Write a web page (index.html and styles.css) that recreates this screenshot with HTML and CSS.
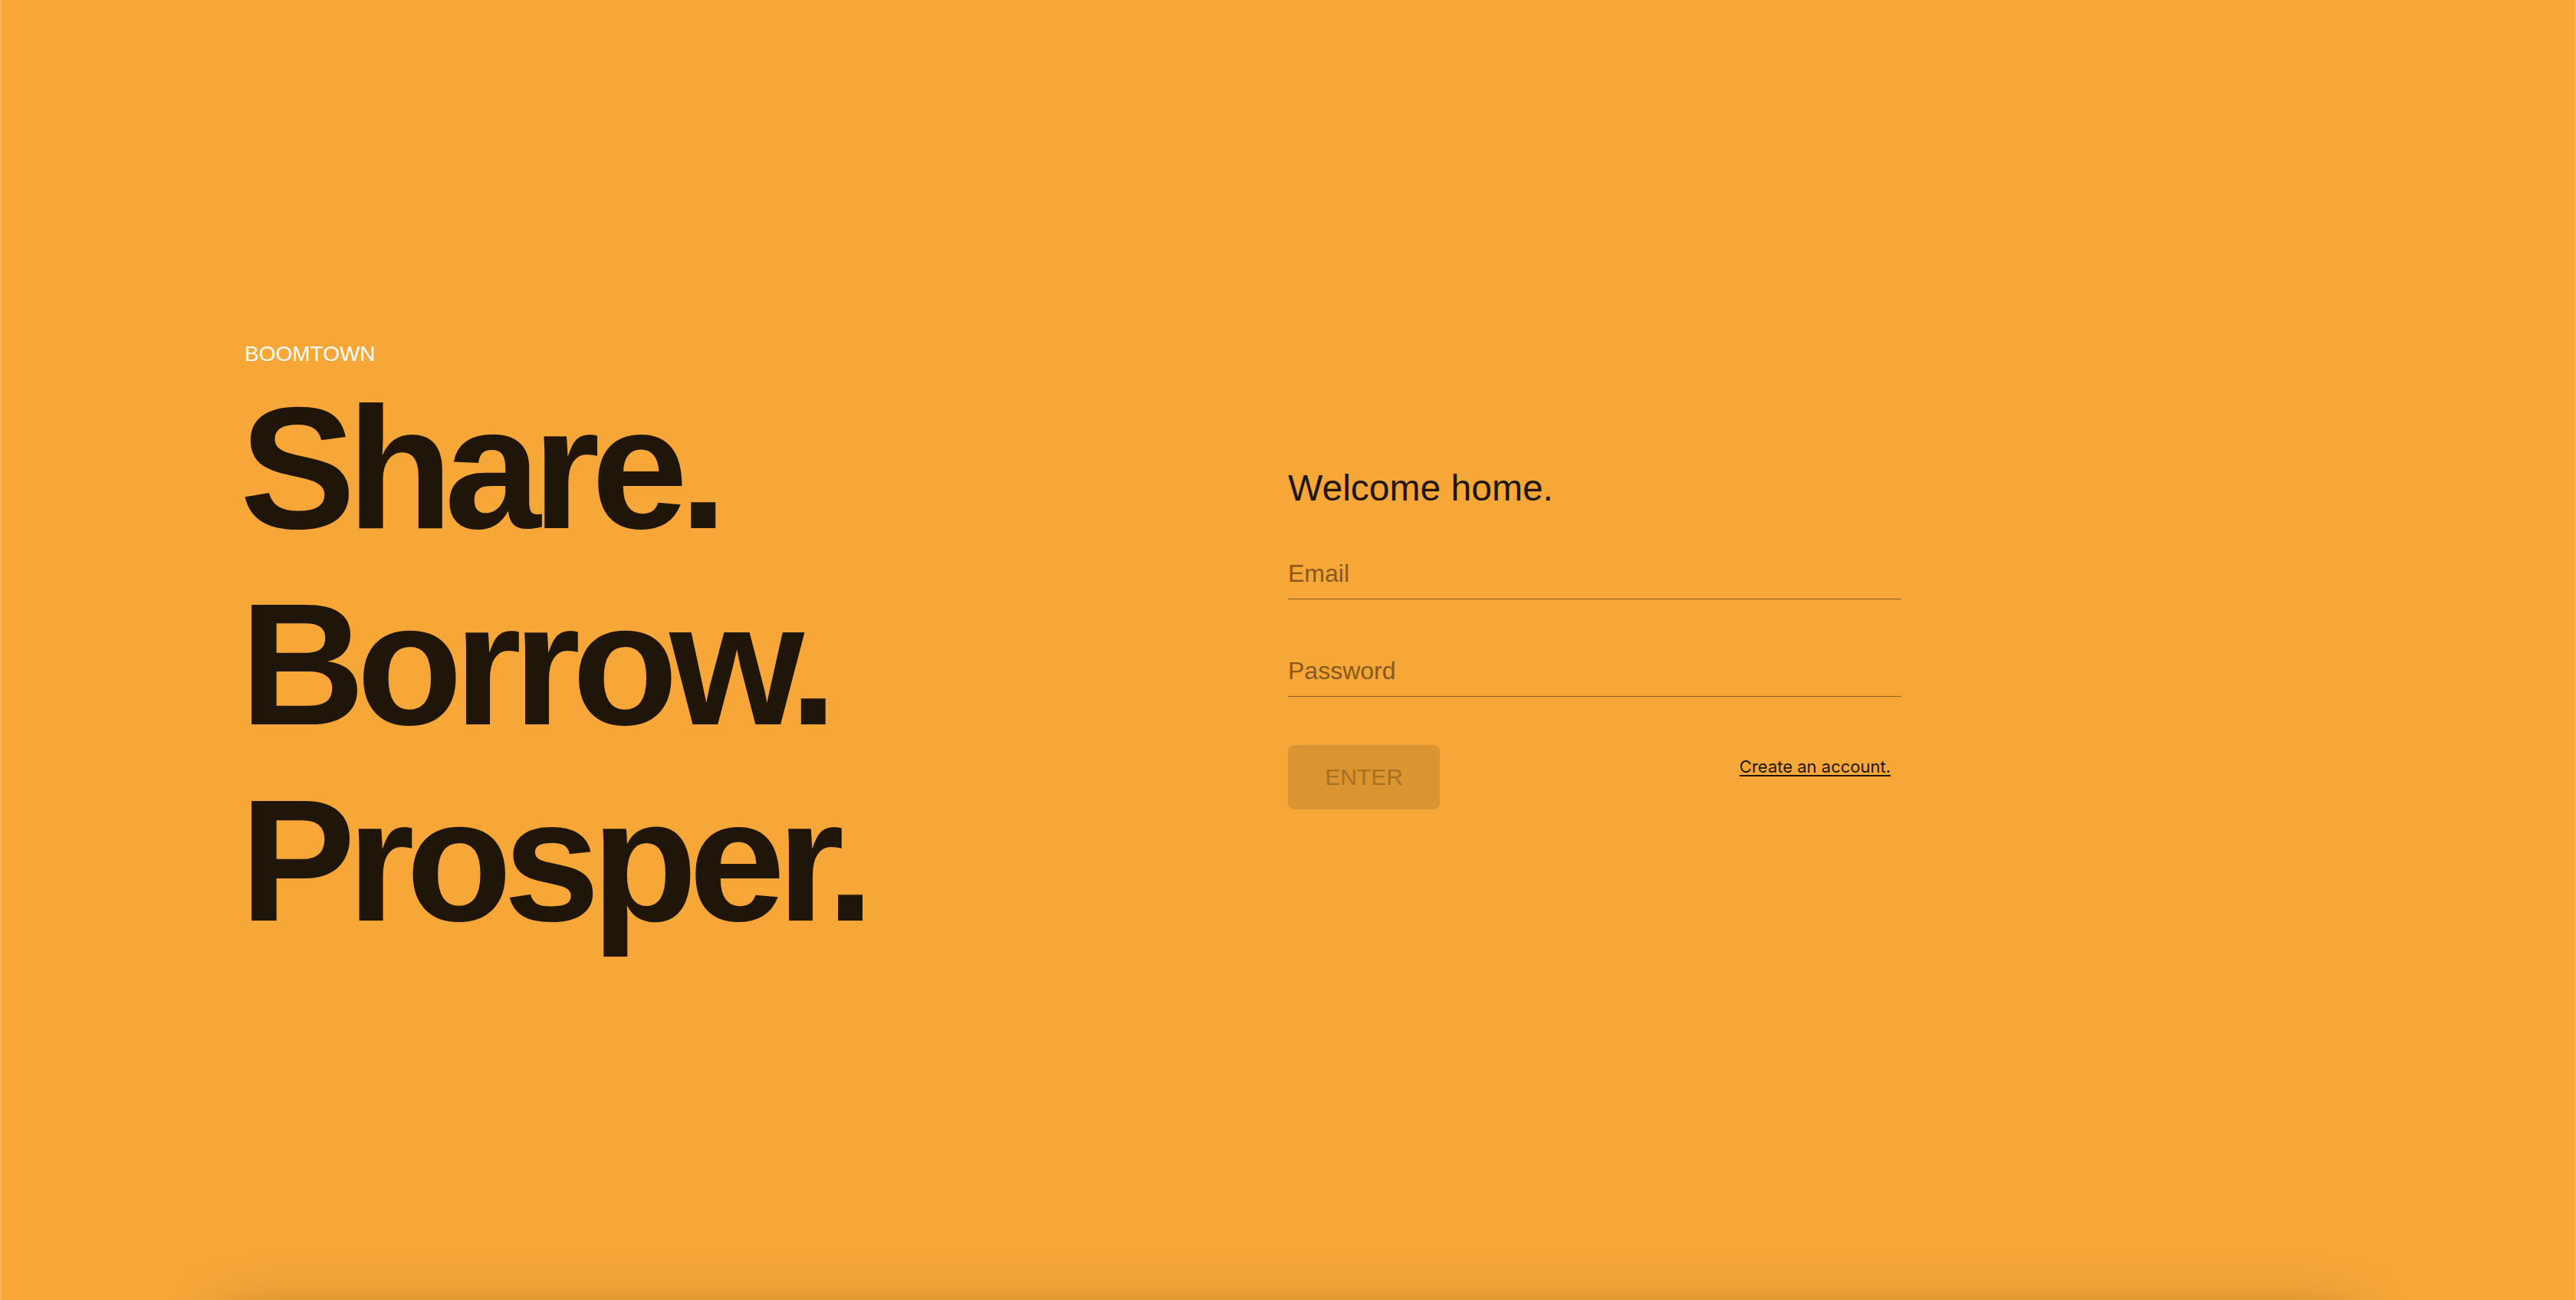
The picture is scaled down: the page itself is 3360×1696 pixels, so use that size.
FILE: index.html
```html
<!DOCTYPE html>
<html lang="en">
<head>
<meta charset="utf-8">
<title>Boomtown</title>
<link rel="stylesheet" href="styles.css">
</head>
<body>
<div class="page">
  <main class="layout">
    <section class="intro">
      <p class="brand">BOOMTOWN</p>
      <h1 class="headline">Share.<br>Borrow.<br>Prosper.</h1>
    </section>
    <section class="login">
      <form class="login-form">
        <h2 class="welcome">Welcome home.</h2>
        <div class="field"><span class="field-label">Email</span></div>
        <div class="field field-second"><span class="field-label">Password</span></div>
        <div class="actions">
          <button type="button" class="enter-btn" disabled>ENTER</button>
          <a class="signup-link" href="#">Create an account.</a>
        </div>
      </form>
    </section>
  </main>
  <div class="bottom-shadow"></div>
</div>
</body>
</html>
```

FILE: styles.css
```css
html, body {
  margin: 0;
  padding: 0;
  height: 100%;
  overflow: hidden;
}

body {
  background: #f7a738;
  font-family: "Liberation Sans", Arial, sans-serif;
}

.page {
  position: relative;
  height: 100vh;
  box-sizing: border-box;
  border-left: 2px solid #f9b459;
  border-right: 2px solid #f9b459;
  overflow: hidden;
}

.layout {
  display: grid;
  grid-template-columns: 1678px 1fr;
  align-items: center;
  height: 100%;
}

.intro {
  padding-left: 311px;
}

.brand {
  margin: 0 0 5px 6px;
  font-size: 28px;
  line-height: 32px;
  color: #ffffff;
}

.headline {
  margin: 0;
  font-size: 226px;
  line-height: 256px;
  font-weight: 700;
  letter-spacing: -11px;
  color: #1f1609;
}

.login-form {
  width: 800px;
  margin: 0;
  padding-bottom: 30px;
}

.welcome {
  margin: 0 0 66px 0;
  font-size: 48px;
  font-weight: 400;
  line-height: 54px;
  color: #1f1609;
}

.field {
  padding-bottom: 14px;
  border-bottom: 1px solid #8b5d20;
}

.field-second {
  margin-top: 75px;
}

.field-label {
  display: block;
  font-size: 32px;
  line-height: 37px;
  color: #87591c;
}

.actions {
  display: flex;
  justify-content: space-between;
  align-items: flex-start;
  margin-top: 63px;
}

.enter-btn {
  width: 198px;
  height: 84px;
  border: none;
  border-radius: 8px;
  background: #da9431;
  color: #a8711f;
  font-family: "Liberation Sans", Arial, sans-serif;
  font-size: 30px;
  padding: 0;
}

.signup-link {
  margin-top: 15px;
  margin-right: 14px;
  font-family: Inter, "Liberation Sans", sans-serif;
  font-size: 22px;
  line-height: 27px;
  color: #1f1609;
  text-decoration: underline;
  text-underline-offset: 3px;
}

.bottom-shadow {
  position: absolute;
  left: 290px;
  right: 290px;
  top: calc(100% + 20px);
  height: 200px;
  box-shadow: 0 0 80px rgba(0, 0, 0, 0.25);
}
```
